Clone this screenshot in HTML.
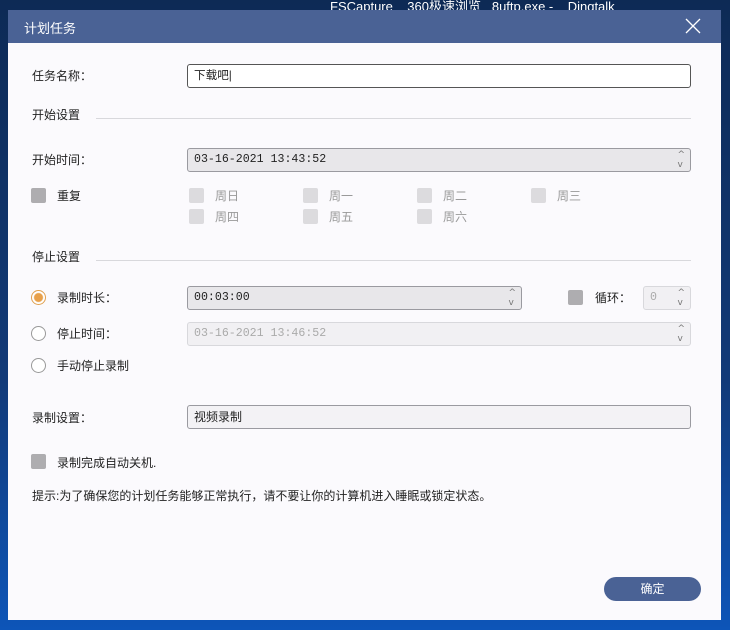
<!DOCTYPE html>
<html><head><meta charset="utf-8"><style>
*{margin:0;padding:0;box-sizing:border-box}
body{width:730px;height:630px;overflow:hidden;position:relative;background:linear-gradient(180deg,#0d2a55 0%,#123a78 60%,#0d55b8 100%);font-family:"Liberation Sans","Noto Sans CJK SC",sans-serif;font-size:12px;color:#222}
.a{position:absolute;white-space:nowrap}
.dlg{position:absolute;left:8px;top:10px;width:713px;height:610px;background:#fbfafd}
.tb{position:absolute;left:8px;top:10px;width:713px;height:33px;background:#4a6295;color:#fff;font-size:13px}
.in{position:absolute;height:24px;border:1px solid #9a9aa0;border-radius:3px;background:#e8e7ea;font-family:"Liberation Mono","Noto Sans CJK SC",monospace;font-size:11.6px;line-height:22px;padding-left:6px}
.dis{background:#f1f0f3;border-color:#d8d8dc;color:#aaa}
.sp{position:absolute;right:5px;top:1px;font-size:9px;line-height:10px;color:#777;font-family:"DejaVu Sans",sans-serif}
.cb{position:absolute;width:15px;height:15px;border-radius:2px;background:#aeadb0}
.cb.l{background:#dcdbde}
.rd{position:absolute;width:15px;height:15px;border-radius:50%;border:1px solid #999;background:#fff}
.hr{position:absolute;height:1px;background:#d8d8dc}
.g{color:#999}
</style></head><body>
<div class="a" style="left:330px;top:-4px;color:#fff;font-size:13px">FSCapture &nbsp;&nbsp; 360极速浏览 &nbsp; 8uftp.exe - &nbsp;&nbsp; Dingtalk</div>
<div class="dlg"></div>
<div class="tb"><span class="a" style="left:16px;top:8px">计划任务</span>
<svg class="a" style="left:677px;top:8px" width="16" height="16"><path d="M1 1L15 15M15 1L1 15" stroke="#fff" stroke-width="1.3"/></svg></div>

<div class="a" style="left:32px;top:67px">任务名称：</div>
<div class="in" style="left:187px;top:64px;width:504px;background:#fff;border-color:#555;font-family:'Liberation Sans','Noto Sans CJK SC',sans-serif">下载吧|</div>

<div class="a" style="left:32px;top:106px">开始设置</div><div class="hr" style="left:96px;top:118px;width:595px"></div>

<div class="a" style="left:32px;top:151px">开始时间：</div>
<div class="in" style="left:187px;top:148px;width:504px">03-16-2021 13:43:52<div class="sp">^<br>v</div></div>

<div class="cb" style="left:31px;top:188px"></div><div class="a" style="left:57px;top:187px">重复</div>
<div class="cb l" style="left:189px;top:188px"></div><div class="a g" style="left:215px;top:187px">周日</div>
<div class="cb l" style="left:303px;top:188px"></div><div class="a g" style="left:329px;top:187px">周一</div>
<div class="cb l" style="left:417px;top:188px"></div><div class="a g" style="left:443px;top:187px">周二</div>
<div class="cb l" style="left:531px;top:188px"></div><div class="a g" style="left:557px;top:187px">周三</div>
<div class="cb l" style="left:189px;top:209px"></div><div class="a g" style="left:215px;top:208px">周四</div>
<div class="cb l" style="left:303px;top:209px"></div><div class="a g" style="left:329px;top:208px">周五</div>
<div class="cb l" style="left:417px;top:209px"></div><div class="a g" style="left:443px;top:208px">周六</div>

<div class="a" style="left:32px;top:248px">停止设置</div><div class="hr" style="left:96px;top:260px;width:595px"></div>

<div class="rd" style="left:31px;top:290px;border-color:#e0a050;background:radial-gradient(circle,#e8a04a 0 4px,#fff 5px)"></div><div class="a" style="left:57px;top:289px">录制时长：</div>
<div class="in" style="left:187px;top:286px;width:335px">00:03:00<div class="sp">^<br>v</div></div>
<div class="cb" style="left:568px;top:290px"></div><div class="a" style="left:595px;top:289px">循环：</div>
<div class="in dis" style="left:643px;top:286px;width:48px">0<div class="sp">^<br>v</div></div>

<div class="rd" style="left:31px;top:326px"></div><div class="a" style="left:57px;top:325px">停止时间：</div>
<div class="in dis" style="left:187px;top:322px;width:504px">03-16-2021 13:46:52<div class="sp">^<br>v</div></div>

<div class="rd" style="left:31px;top:358px"></div><div class="a" style="left:57px;top:357px">手动停止录制</div>

<div class="a" style="left:32px;top:409px">录制设置：</div>
<div class="in" style="left:187px;top:405px;width:504px;background:#f3f2f5;font-family:'Liberation Sans','Noto Sans CJK SC',sans-serif;font-size:12px">视频录制</div>

<div class="cb" style="left:31px;top:454px"></div><div class="a" style="left:57px;top:454px">录制完成自动关机.</div>
<div class="a" style="left:32px;top:487px">提示:为了确保您的计划任务能够正常执行，请不要让你的计算机进入睡眠或锁定状态。</div>

<div class="a" style="left:604px;top:577px;width:97px;height:24px;border-radius:12px;background:#4a6295;color:#fff;text-align:center;line-height:24px">确定</div>
</body></html>
